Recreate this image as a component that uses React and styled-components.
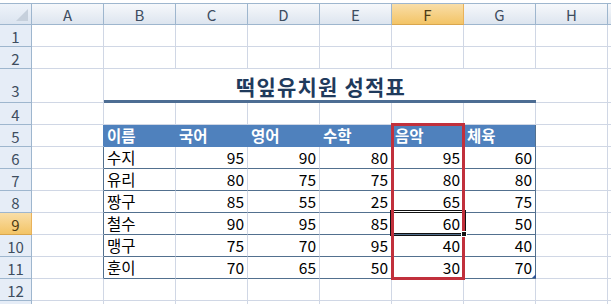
import React from 'react';
import styled, { createGlobalStyle, css } from 'styled-components';

const Global = createGlobalStyle`
  html, body { margin: 0; padding: 0; background: #fff; }
  body { font-family: "Noto Sans CJK KR", "Noto Sans", sans-serif; }
`;

const COLS = ['A', 'B', 'C', 'D', 'E', 'F', 'G', 'H'];
const GRID = '#d0d7e5';
const HEAD_LINE = '#9eb6ce';
const TABLE_LINE = '#52708f';
const BLUE = '#4f81bd';

const heads = ['이름', '국어', '영어', '수학', '음악', '체육'];
const names = ['수지', '유리', '짱구', '철수', '맹구', '훈이'];
const scores = [
  [95, 90, 80, 95, 60],
  [80, 75, 75, 80, 80],
  [85, 55, 25, 65, 75],
  [90, 95, 85, 60, 50],
  [75, 70, 95, 40, 40],
  [70, 65, 50, 30, 70],
];

const Frame = styled.div`
  position: relative;
  width: 611px;
  height: 304px;
  overflow: hidden;
  padding-top: 3px;
  box-sizing: border-box;
  background: #fff;
`;

const Sheet = styled.div`
  display: grid;
  grid-template-columns: 32px repeat(8, 72px) 1fr;
  grid-template-rows: 21px 22px 22px 34px repeat(10, 22px);
  border-top: 1px solid ${HEAD_LINE};
`;

const Cell = styled.div`
  box-sizing: border-box;
  display: flex;
  align-items: center;
  justify-content: ${(p) => (p.$right ? 'flex-end' : 'flex-start')};
  padding: 1px 3px 0;
  border-right: 1px solid ${(p) => p.$r || GRID};
  border-bottom: 1px solid ${(p) => p.$b || GRID};
  background: ${(p) => p.$bg || '#fff'};
  color: ${(p) => p.$color || '#000'};
  font-weight: ${(p) => (p.$bold ? 700 : 400)};
  font-size: 15.5px;
  line-height: 1;
  white-space: nowrap;
  overflow: hidden;
`;

const Corner = styled.div`
  box-sizing: border-box;
  position: relative;
  background: linear-gradient(#eef3fa, #dbe4f0);
  border-right: 1px solid ${HEAD_LINE};
  border-bottom: 1px solid ${HEAD_LINE};
  display: flex;
  align-items: flex-end;
  justify-content: flex-end;
  padding: 0 3px 3px 0;
`;

const headerBg = css`
  background: ${(p) =>
    p.$active
      ? 'linear-gradient(#f9dea8, #f3c466)'
      : 'linear-gradient(#f6f8fb, #dde5ef)'};
`;

const ColHeader = styled.div`
  box-sizing: border-box;
  ${headerBg};
  border-right: 1px solid ${(p) => (p.$active ? '#e9b25a' : HEAD_LINE)};
  border-bottom: 1px solid ${(p) => (p.$active ? '#d9a64e' : HEAD_LINE)};
  display: flex;
  align-items: center;
  justify-content: center;
  padding-top: 1px;
  font-size: 15px;
  color: ${(p) => (p.$active ? '#4d3b14' : '#3e4d5f')};
  line-height: 1;
`;

const RowHeader = styled.div`
  box-sizing: border-box;
  background: ${(p) => (p.$active ? 'linear-gradient(#f9dea8, #f3c466)' : '#e6edf7')};
  border-right: 1px solid ${(p) => (p.$active ? '#e9b25a' : HEAD_LINE)};
  border-bottom: 1px solid ${(p) => (p.$active ? '#d9a64e' : HEAD_LINE)};
  display: flex;
  align-items: ${(p) => (p.$tall ? 'flex-end' : 'center')};
  justify-content: center;
  padding: 1px 0 ${(p) => (p.$tall ? '4px' : '0')};
  font-size: 15px;
  color: ${(p) => (p.$active ? '#4d3b14' : '#3e4d5f')};
  line-height: 1;
`;

const Title = styled.div`
  grid-column: 3 / span 6;
  box-sizing: border-box;
  display: flex;
  align-items: center;
  justify-content: center;
  padding-top: 2px;
  padding-left: 2px;
  border-bottom: 3px solid #4d6d93;
  font-size: 21px;
  font-weight: 700;
  color: #1f3a5c;
  letter-spacing: 1.2px;
`;

const RedBox = styled.div`
  position: absolute;
  left: 391px;
  top: 123px;
  width: 74px;
  height: 157px;
  box-sizing: border-box;
  border: 3px solid #c1303c;
  pointer-events: none;
`;

const Selection = styled.div`
  position: absolute;
  left: 390px;
  top: 210px;
  width: 76px;
  height: 26px;
  box-sizing: border-box;
  border-top: 3px double #111;
  border-bottom: 3px double #111;
  border-left: 2px solid #111;
  border-right: 2px solid #111;
  pointer-events: none;
`;

const FillHandle = styled.div`
  position: absolute;
  left: 461px;
  top: 231px;
  width: 6px;
  height: 6px;
  box-sizing: border-box;
  background: #111;
  border: 1px solid #fff;
`;

const ResizeMark = styled.svg`
  position: absolute;
  left: 532px;
  top: 274px;
`;

function cellFor(row, ci) {
  const inTableCols = ci >= 1 && ci <= 6;
  const key = `${row}-${ci}`;
  if (row === 5) {
    if (inTableCols) {
      return (
        <Cell key={key} $bg={BLUE} $r={ci === 6 ? TABLE_LINE : BLUE} $b={BLUE} $color="#fff" $bold>
          {heads[ci - 1]}
        </Cell>
      );
    }
    if (ci === 0) return <Cell key={key} $r={BLUE} />;
  }
  if (row >= 6 && row <= 11) {
    const d = row - 6;
    if (ci === 0) return <Cell key={key} $r={TABLE_LINE} />;
    if (ci === 1)
      return (
        <Cell key={key} $b={TABLE_LINE}>
          {names[d]}
        </Cell>
      );
    if (inTableCols)
      return (
        <Cell key={key} $right $b={TABLE_LINE} $r={ci === 6 ? TABLE_LINE : GRID}>
          {scores[d][ci - 2]}
        </Cell>
      );
  }
  return <Cell key={key} />;
}

export default function App() {
  const rows = [];
  for (let r = 1; r <= 13; r++) {
    rows.push(
      <RowHeader key={`h${r}`} $active={r === 9} $tall={r === 3}>
        {r < 13 ? r : ''}
      </RowHeader>
    );
    if (r === 3) {
      rows.push(<Cell key="3-0" />);
      rows.push(<Title key="title">떡잎유치원 성적표</Title>);
      rows.push(<Cell key="3-7" />);
    } else {
      for (let c = 0; c < 8; c++) rows.push(cellFor(r, c));
    }
    rows.push(<Cell key={`f${r}`} $r="transparent" />);
  }

  return (
    <>
      <Global />
      <Frame>
        <Sheet>
          <Corner>
            <svg width="12" height="12" viewBox="0 0 12 12">
              <polygon points="12,0 12,12 0,12" fill="#c6d0dc" />
            </svg>
          </Corner>
          {COLS.map((c) => (
            <ColHeader key={c} $active={c === 'F'}>
              {c}
            </ColHeader>
          ))}
          <ColHeader />
          {rows}
        </Sheet>
        <Selection />
        <RedBox />
        <FillHandle />
        <ResizeMark width="4" height="4" viewBox="0 0 4 4">
          <polygon points="4,0 4,4 0,4" fill="#2f5597" />
        </ResizeMark>
      </Frame>
    </>
  );
}
